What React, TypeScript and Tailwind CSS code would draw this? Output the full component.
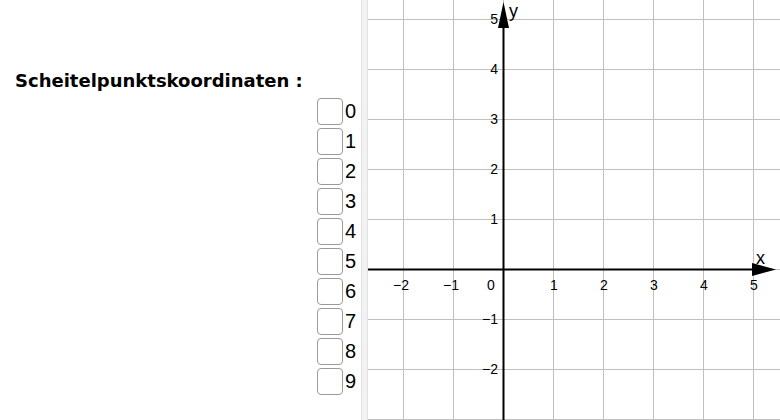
import React from 'react';

const digits = [0, 1, 2, 3, 4, 5, 6, 7, 8, 9];

// origin of the coordinate system inside the svg, 50px per unit
const ox = 135;
const oy = 269;
const unit = 50;
const ticks = [-2, -1, 1, 2, 3, 4, 5];

const label = (k: number) => (k < 0 ? '\u2212' + -k : String(k));

const Graph = () => {
  const xs = [-2, -1, 0, 1, 2, 3, 4, 5];
  const ys = [-3, -2, -1, 0, 1, 2, 3, 4, 5];
  return (
    <svg width="412" height="420" viewBox="0 0 412 420" className="block shrink-0">
      {xs.map((k) => (
        <line key={'v' + k} x1={ox + k * unit + 0.5} y1="0" x2={ox + k * unit + 0.5} y2="420" stroke="#c0c0c0" strokeWidth="1" />
      ))}
      {ys.map((k) => (
        <line key={'h' + k} x1="0" y1={oy - k * unit + 0.5} x2="412" y2={oy - k * unit + 0.5} stroke="#c0c0c0" strokeWidth="1" />
      ))}
      {/* axes */}
      <line x1="0" y1={oy + 0.5} x2="392" y2={oy + 0.5} stroke="#000" strokeWidth="2" />
      <line x1={ox + 0.5} y1="420" x2={ox + 0.5} y2="20" stroke="#000" strokeWidth="2" />
      <polygon points={`${ox + 0.5},2 ${ox - 5},28 ${ox + 6},28`} fill="#000" />
      <polygon points={`408,${oy + 0.5} 384,${oy - 6} 384,${oy + 7}`} fill="#000" />
      <g style={{ fontFamily: "'Liberation Sans', Arial, sans-serif" }} fontSize="14" fill="#000">
        {ticks.map((k) => (
          <text key={'xl' + k} x={ox + k * unit + (k < 0 ? -2 : 1)} y="290" textAnchor="middle">
            {label(k)}
          </text>
        ))}
        <text x={ox - 12} y="290" textAnchor="middle">0</text>
        {ticks.map((k) => (
          <text key={'yl' + k} x={ox - 5} y={oy - k * unit + 5} textAnchor="end">
            {label(k)}
          </text>
        ))}
        <text x="388" y="264" fontSize="18">x</text>
        <text x={ox + 6} y="17" fontSize="18">y</text>
      </g>
    </svg>
  );
};

const App = () => {
  return (
    <div className="flex w-[780px] h-[420px] bg-white overflow-hidden" style={{ fontFamily: "'Liberation Sans', Arial, sans-serif" }}>
      <div className="w-[361px] shrink-0 flex flex-col">
        <h1 className="pl-[15px] pt-[69px] text-[18px] leading-[24px] font-bold text-black" style={{ fontFamily: "'DejaVu Sans', sans-serif" }}>
          Scheitelpunktskoordinaten :
        </h1>
        <div className="pl-[317px] mt-[3px] flex flex-col">
          {digits.map((d) => (
            <label key={d} className="flex items-center h-[30px]">
              <span className="w-[26px] h-[27px] rounded-[4px] border-[1.5px] border-[#9a9a9a] bg-white" />
              <span className="ml-[2px] text-[20px] leading-none text-black">{d}</span>
            </label>
          ))}
        </div>
      </div>
      <div className="w-[7px] shrink-0 bg-[#f2f2f2] border-x border-[#e2e2e2]" />
      <Graph />
    </div>
  );
};

export default App;
